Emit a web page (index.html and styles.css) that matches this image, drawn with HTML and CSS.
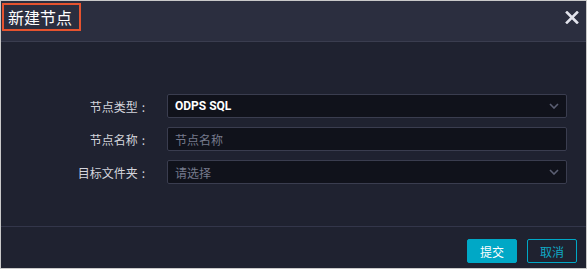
FILE: index.html
```html
<!DOCTYPE html>
<html lang="zh-CN">
<head>
    <meta charset="UTF-8">
    <meta name="viewport" content="width=device-width, initial-scale=1.0">
    <title>新建节点</title>
    <link rel="stylesheet" href="styles.css">
</head>
<body>
    <div class="dialog">
        <div class="dialog-header">
            <span class="dialog-title">新建节点</span>
            <span class="dialog-close">
                <svg width="14" height="13" viewBox="0 0 14 13">
                    <path d="M2 1.5 L12 11.5 M12 1.5 L2 11.5" stroke="#e2e3ec" stroke-width="2.6" stroke-linecap="square" fill="none"/>
                </svg>
            </span>
        </div>
        <div class="dialog-body">
            <div class="form-row">
                <label class="form-label">节点类型<span class="colon">:</span></label>
                <div class="form-field select">
                    <span class="value">ODPS SQL</span>
                    <svg class="arrow" width="10" height="6" viewBox="0 0 10 6"><path d="M1 1 L5 5 L9 1" stroke="#5b5f73" stroke-width="1.6" fill="none"/></svg>
                </div>
            </div>
            <div class="form-row">
                <label class="form-label">节点名称<span class="colon">:</span></label>
                <div class="form-field">
                    <span class="placeholder">节点名称</span>
                </div>
            </div>
            <div class="form-row">
                <label class="form-label">目标文件夹<span class="colon">:</span></label>
                <div class="form-field select">
                    <span class="placeholder">请选择</span>
                    <svg class="arrow" width="10" height="6" viewBox="0 0 10 6"><path d="M1 1 L5 5 L9 1" stroke="#5b5f73" stroke-width="1.6" fill="none"/></svg>
                </div>
            </div>
        </div>
        <div class="dialog-footer">
            <button class="btn btn-primary">提交</button>
            <button class="btn btn-outline">取消</button>
        </div>
    </div>
</body>
</html>
```

FILE: styles.css
```css
body {
    margin: 0;
    background-color: #c9c9c9;
    font-family: "Noto Sans CJK SC", "Liberation Sans", sans-serif;
}
.dialog {
    width: 587px;
    height: 269px;
    box-sizing: border-box;
    border: 1px solid #c9c9c9;
    background-color: #1f2230;
    display: flex;
    flex-direction: column;
}
.dialog-header {
    height: 40px;
    background-color: #2b2e3f;
    border-bottom: 1px solid #3a3d4f;
    display: flex;
    justify-content: space-between;
    align-items: flex-start;
}
.dialog-title {
    margin: 2px 0 0 1px;
    width: 71px;
    height: 24px;
    border: 2px solid #e6532f;
    color: #ffffff;
    font-size: 16px;
    line-height: 24px;
    padding-left: 4px;
}
.dialog-close {
    margin: 10px 7px 0 0;
    display: flex;
}
.dialog-body {
    flex: 1;
    padding-top: 52px;
    display: flex;
    flex-direction: column;
    gap: 9px;
}
.form-row {
    display: flex;
    align-items: center;
    height: 24px;
}
.form-label {
    width: 166px;
    padding-right: 22px;
    text-align: right;
    color: #d4d5dc;
    font-size: 12px;
    box-sizing: border-box;
}
.colon {
    margin-left: 4px;
}
.form-field {
    width: 400px;
    height: 24px;
    box-sizing: border-box;
    border: 1px solid #3a3d4f;
    border-radius: 2px;
    background-color: #10121b;
    padding: 0 7px;
    display: flex;
    align-items: center;
    justify-content: space-between;
    font-size: 12px;
}
.value {
    color: #ffffff;
    font-weight: bold;
    font-family: Roboto, "Liberation Sans", sans-serif;
}
.placeholder {
    color: #767a8c;
}
.dialog-footer {
    height: 42px;
    border-top: 1px solid #33364a;
    box-sizing: border-box;
    padding: 12px 9px 0 0;
    display: flex;
    justify-content: flex-end;
    align-items: flex-start;
    gap: 10px;
}
.btn {
    width: 50px;
    height: 24px;
    border-radius: 2px;
    font-size: 12px;
    font-family: "Noto Sans CJK SC", sans-serif;
    padding: 0;
    cursor: pointer;
}
.btn-primary {
    background-color: #00a8c6;
    border: 1px solid #00a8c6;
    color: #ffffff;
}
.btn-outline {
    background-color: transparent;
    border: 1px solid #00a8c6;
    color: #0fa9c6;
}
```
